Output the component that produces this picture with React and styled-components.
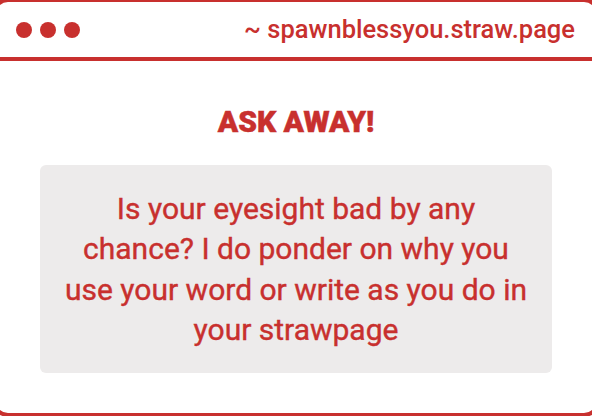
import React from 'react';
import styled, { createGlobalStyle } from 'styled-components';

const RED = '#c8302e';

const GlobalStyle = createGlobalStyle`
  body {
    margin: 0;
    background: #ffffff;
    font-family: Roboto, "Liberation Sans", sans-serif;
    overflow: hidden;
  }
`;

const Window = styled.div`
  box-sizing: border-box;
  margin: -2px -8px 0;
  height: 419px;
  border: 4px solid ${RED};
  border-radius: 16px;
  display: flex;
  flex-direction: column;
`;

const TitleBar = styled.div`
  height: 55px;
  border-bottom: 4px solid ${RED};
  display: flex;
  align-items: center;
  justify-content: space-between;
  padding: 0 21px 0 20px;
`;

const Dots = styled.div`
  display: flex;
  gap: 8px;
`;

const Dot = styled.span`
  width: 16px;
  height: 16px;
  border-radius: 50%;
  background: ${RED};
`;

const Url = styled.span`
  font-size: 25.5px;
  font-weight: 500;
  color: ${RED};
  line-height: 1;
`;

const Content = styled.main`
  display: flex;
  flex-direction: column;
  padding: 43px 44px 0;
  gap: 25px;
`;

const Heading = styled.h1`
  margin: 0;
  text-align: center;
  font-size: 30px;
  line-height: 36px;
  font-weight: 900;
  -webkit-text-stroke: 0.5px ${RED};
  color: ${RED};
`;

const Card = styled.div`
  background: #edebeb;
  border-radius: 6px;
  padding: 24px 20px 23px;
  text-align: center;
  font-size: 30px;
  font-weight: 400;
  -webkit-text-stroke: 0.4px ${RED};
  line-height: 40.3px;
  color: ${RED};
`;

export default function App() {
  return (
    <>
      <GlobalStyle />
      <Window>
        <TitleBar>
          <Dots>
            <Dot />
            <Dot />
            <Dot />
          </Dots>
          <Url>~ spawnblessyou.straw.page</Url>
        </TitleBar>
        <Content>
          <Heading>ASK AWAY!</Heading>
          <Card>
            Is your eyesight bad by any chance? I do ponder on why you use your word or write as you do in your strawpage
          </Card>
        </Content>
      </Window>
    </>
  );
}
